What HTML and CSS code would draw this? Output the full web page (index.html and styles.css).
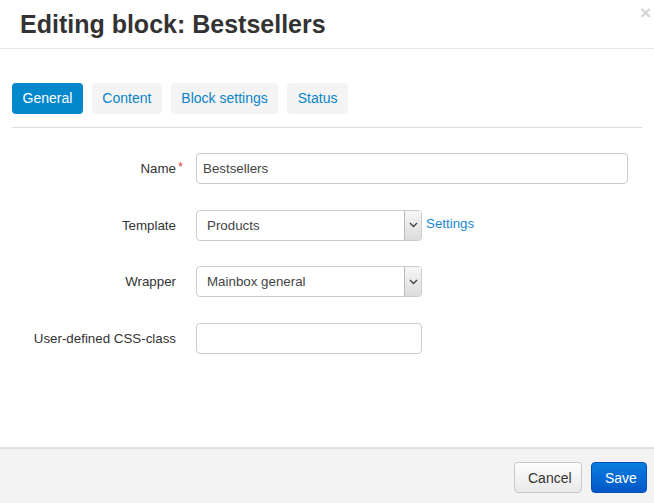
FILE: index.html
```html
<!DOCTYPE html>
<html>
<head>
<meta charset="utf-8">
<link rel="stylesheet" href="styles.css">
</head>
<body>
<div class="modal">
  <div class="modal-header">
    <h1 class="title">Editing block: Bestsellers</h1>
    <span class="close">&times;</span>
  </div>
  <div class="modal-body">
    <div class="tabs">
      <span class="tab active">General</span>
      <span class="tab">Content</span>
      <span class="tab">Block settings</span>
      <span class="tab">Status</span>
    </div>
    <div class="form">
      <div class="row">
        <label class="label required">Name<span class="star">*</span></label>
        <div class="control"><div class="input wide">Bestsellers</div></div>
      </div>
      <div class="row">
        <label class="label">Template</label>
        <div class="control">
          <div class="select"><span class="select-text">Products</span><span class="arrow"><svg width="9" height="6" viewBox="0 0 9 6"><path d="M1 1 L4.5 4.5 L8 1" fill="none" stroke="#444" stroke-width="1.4"/></svg></span></div>
          <a class="link">Settings</a>
        </div>
      </div>
      <div class="row">
        <label class="label">Wrapper</label>
        <div class="control">
          <div class="select"><span class="select-text">Mainbox general</span><span class="arrow"><svg width="9" height="6" viewBox="0 0 9 6"><path d="M1 1 L4.5 4.5 L8 1" fill="none" stroke="#444" stroke-width="1.4"/></svg></span></div>
        </div>
      </div>
      <div class="row">
        <label class="label">User-defined CSS-class</label>
        <div class="control"><div class="input narrow"></div></div>
      </div>
    </div>
  </div>
  <div class="modal-footer">
    <button class="btn btn-cancel">Cancel</button>
    <button class="btn btn-save">Save</button>
  </div>
</div>
</body>
</html>
```
FILE: styles.css
```css
html, body {
  margin: 0;
  padding: 0;
  background: #fff;
  font-family: "Liberation Sans", Arial, sans-serif;
  font-size: 13.33px;
  color: #333;
}
.modal {
  width: 654px;
  height: 503px;
  display: flex;
  flex-direction: column;
}
.modal-header {
  position: relative;
  height: 48px;
  border-bottom: 1px solid #e8e8e8;
  box-sizing: content-box;
}
.title {
  margin: 0;
  padding: 9px 0 0 20px;
  font-size: 25px;
  line-height: 30px;
  font-weight: bold;
  color: #333;
}
.close {
  position: absolute;
  right: 3px;
  top: 3px;
  font-size: 19px;
  font-weight: bold;
  color: #d4d4d4;
  line-height: 20px;
}
.modal-body {
  flex: 1;
  padding: 34px 12px 0 12px;
}
.tabs {
  display: flex;
  gap: 9px;
  padding-bottom: 13px;
  border-bottom: 1px solid #ddd;
}
.tab {
  height: 31px;
  line-height: 31px;
  padding: 0 10.5px;
  font-size: 14px;
  border-radius: 4px;
  background: #f4f4f4;
  color: #0b84c8;
}
.tab.active {
  background: #0388cc;
  color: #fff;
}
.form {
  padding-top: 25px;
}
.row {
  display: flex;
  align-items: center;
  margin-bottom: 25.67px;
}
.label {
  position: relative;
  width: 164px;
  text-align: right;
  margin-right: 20px;
  color: #333;
}
.star {
  position: absolute;
  right: -7px;
  top: -1px;
  color: #e53935;
  font-size: 12px;
}
.control {
  display: flex;
  align-items: center;
}
.input {
  height: 31px;
  box-sizing: border-box;
  border: 1px solid #ccc;
  border-radius: 4px;
  line-height: 29px;
  padding: 0 6px;
  color: #444;
  background: #fff;
}
.input.wide { width: 432px; }
.input.narrow { width: 226px; }
.select {
  width: 226px;
  height: 31px;
  box-sizing: border-box;
  border: 1px solid #ccc;
  border-radius: 4px;
  display: flex;
  overflow: hidden;
  background: #fff;
}
.select-text {
  flex: 1;
  line-height: 29px;
  padding-left: 10px;
  color: #444;
}
.arrow {
  width: 16px;
  border-left: 1px solid #bbb;
  background: linear-gradient(#f6f6f6, #dcdcdc);
  display: flex;
  align-items: center;
  justify-content: center;
}
.link {
  margin-left: 4px;
  color: #1a88d1;
  margin-top: -4px;
}
.modal-footer {
  height: 56px;
  border-top: 2px solid #e0e0e0;
  background: #f3f3f3;
  display: flex;
  justify-content: flex-end;
  align-items: flex-start;
  padding: 13px 7px 0 0;
  box-sizing: border-box;
  gap: 9px;
}
.btn {
  height: 31px;
  border-radius: 4px;
  font-family: "Liberation Sans", Arial, sans-serif;
  font-size: 14px;
  padding: 0 13px;
}
.btn-cancel {
  width: 68px;
  border: 1px solid #c8c8c8;
  background: linear-gradient(#fefefe, #e8e8e8);
  color: #333;
}
.btn-save {
  width: 56px;
  border: 1px solid #0050b8;
  background: linear-gradient(#0a7ee0, #0057c8);
  color: #fff;
}
```
